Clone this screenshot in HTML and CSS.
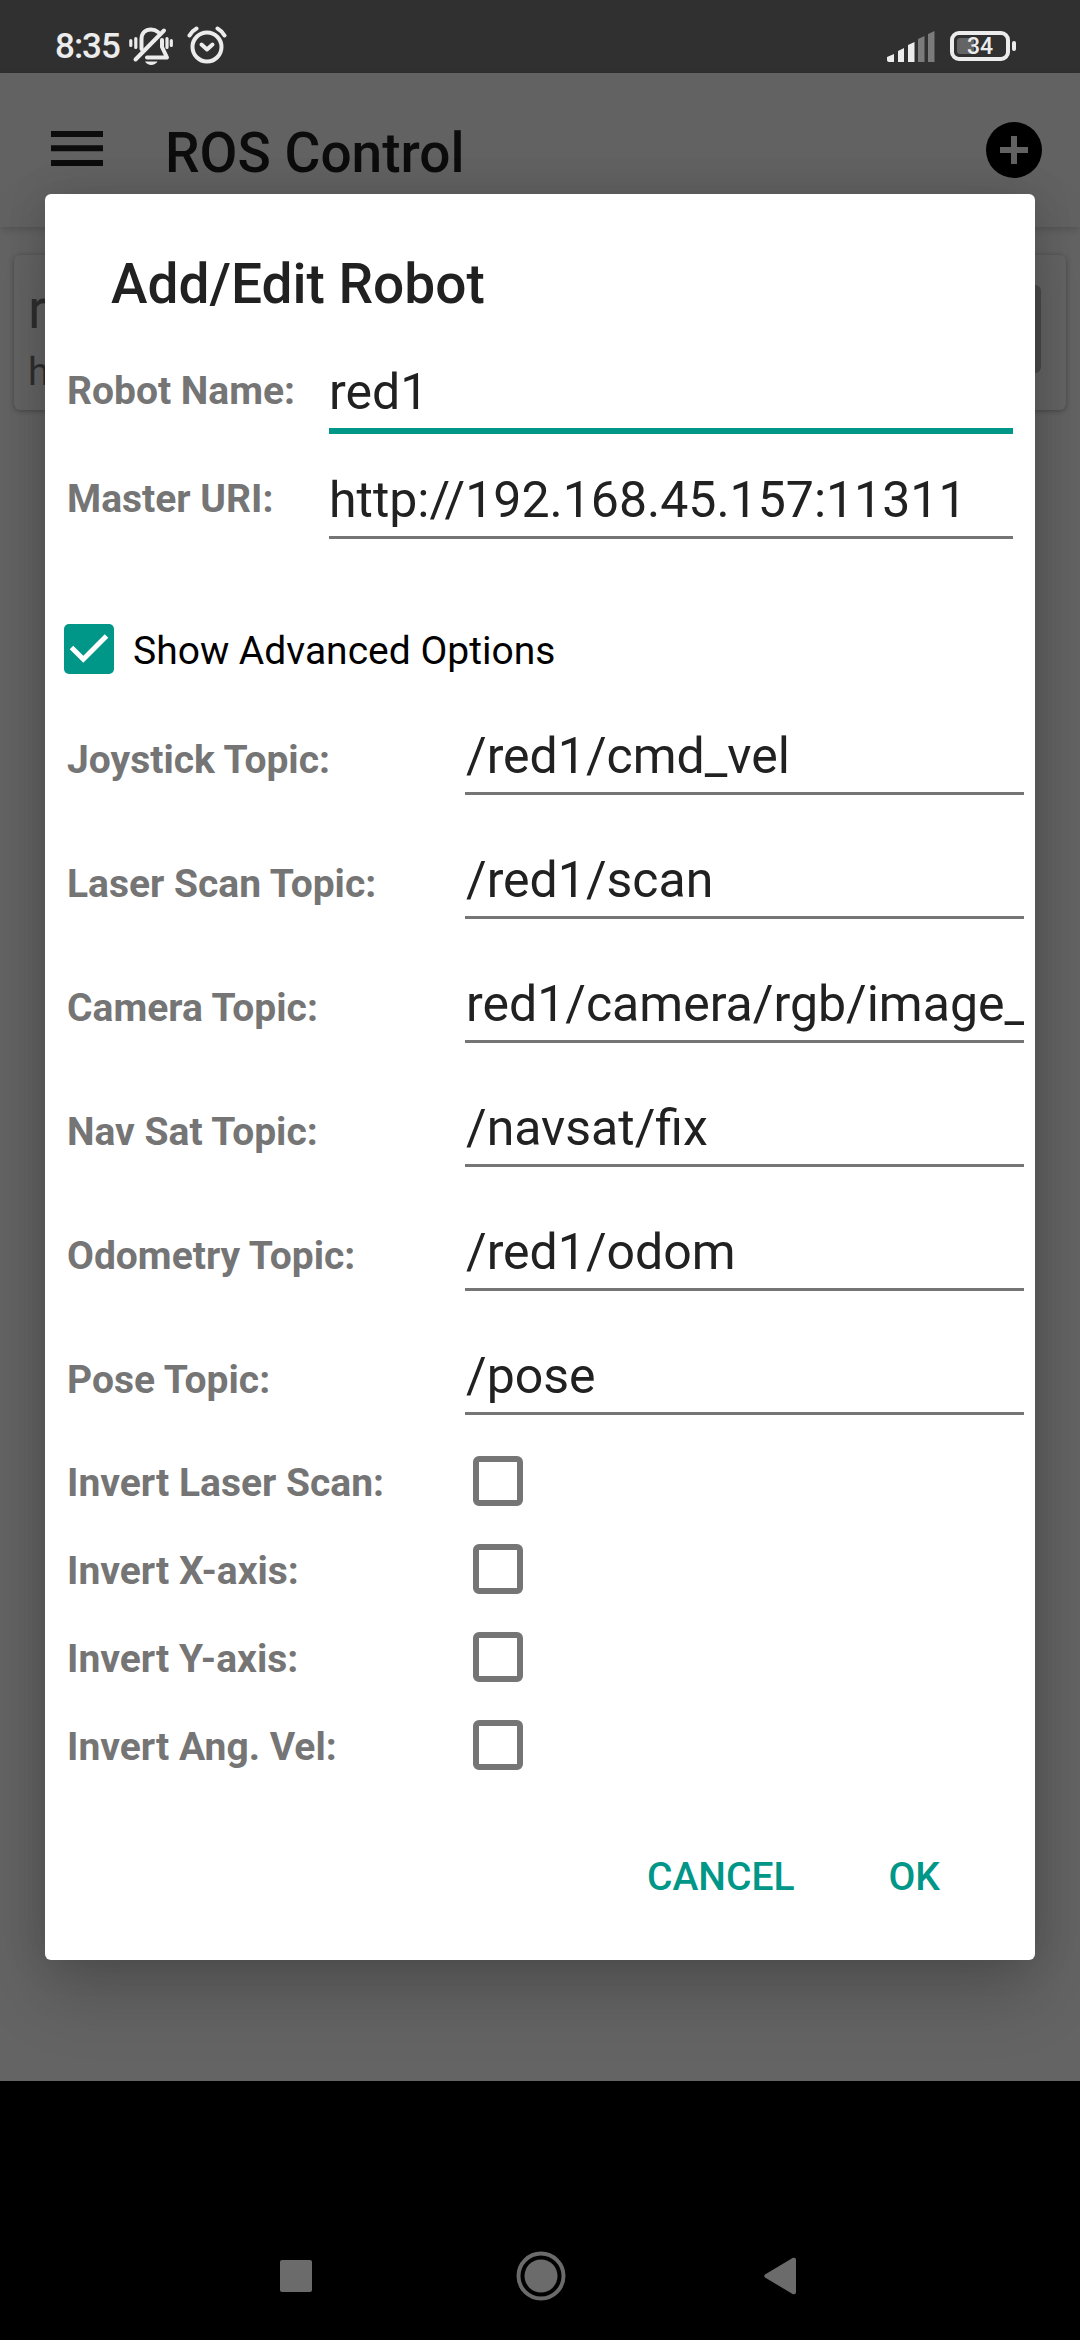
FILE: index.html
```html
<!DOCTYPE html>
<html lang="en">
<head>
<meta charset="utf-8">
<title>ROS Control</title>
<link rel="stylesheet" href="styles.css">
</head>
<body>
<div class="screen">
  <header class="status">
    <span class="clock">8:35</span>
    <svg class="bell" width="44" height="40" viewBox="0 0 44 40" fill="none" stroke="#ececec" stroke-linecap="round">
      <path stroke-width="3.2" d="M1.8 13.5v5M6.8 11.5v9M38 11.5v9M42.300 13.5v5"/>
      <path stroke-width="4" stroke-linejoin="round" d="M12.5 22V12C12.5 6 16.500 2.500 22 2.500C24.500 2.500 27 3.300 29 5M33 13V20L38 30.500H18"/>
      <path stroke-width="4" d="M35 3.500L6.500 32.500"/>
      <path fill="#ececec" stroke="none" d="M16 34.500H28.500C26 39 18.500 39 16 34.500Z"/>
    </svg>
    <svg class="alarm" width="40" height="40" viewBox="0 0 40 40" fill="none" stroke="#ececec" stroke-linecap="round">
      <circle cx="20" cy="21" r="14.500" stroke-width="4"/>
      <path stroke-width="4" stroke-linejoin="round" d="M14.500 18.500L20 23.500L25.500 18.500"/>
      <path stroke-width="4" d="M2.500 9.500Q5 5 9.500 2.500M30.500 2.500Q35 5 37.500 9.500"/>
    </svg>
    <svg class="signal" width="48" height="31" viewBox="0 0 48 31">
      <path fill="#ececec" d="M0 26L7 23V31H2Q0 31 0 29ZM11 20L17 17V31H11ZM21 14L27.500 11V31H21Z"/>
      <path fill="#7b7b7b" d="M31 8L37.500 5V31H31ZM41 3L47.500 0V31H41Z"/>
    </svg>
    <div class="battery"><span class="level"></span><span class="percent">34</span></div>
  </header>
  <div class="appbar">
    <svg class="menu" width="52" height="35" viewBox="0 0 52 35" fill="#0c0c0c"><path d="M0 0H52V6H0ZM0 14.300H52V20.300H0ZM0 29H52V35H0Z"/></svg>
    <h1 class="apptitle">ROS Control</h1>
    <svg class="add" width="56" height="56" viewBox="0 0 56 56"><circle cx="28" cy="28" r="28"/><path fill="#626262" d="M25 14H31V25H42V31H31V42H25V31H14V25H25Z"/></svg>
  </div>
  <main class="content">
    <div class="card">
      <div><div class="robot">r</div><div class="uri">h</div></div>
      <div class="cardbtn"></div>
    </div>
  </main>
  <nav class="nav">
    <svg width="32" height="32" viewBox="0 0 32 32"><rect width="32" height="32" rx="2"/></svg>
    <svg class="home" width="50" height="50" viewBox="0 0 50 50"><circle cx="25" cy="25" r="22.500" fill="none" stroke="#6b6b6b" stroke-width="4"/><circle cx="25" cy="25" r="16.500"/></svg>
    <svg width="32" height="38" viewBox="0 0 32 38"><path d="M1 17.500L29 .8Q32 0 32 3V35Q32 38 29 37.200L1 20.500Q-.5 19 1 17.500Z"/></svg>
  </nav>
  <section class="dialog">
    <h2 class="title">Add/Edit Robot</h2>
    <div class="row main"><label>Robot Name:</label><div class="field focus">red1</div></div>
    <div class="row main"><label>Master URI:</label><div class="field">http://192.168.45.157:11311</div></div>
    <div class="advanced">
      <svg width="50" height="50" viewBox="0 0 50 50"><rect width="50" height="50" rx="5" fill="#009688"/><path fill="none" stroke="#fff" stroke-width="5" d="M7.500 23.500L19.300 35.300L42.500 12"/></svg>
      <span>Show Advanced Options</span>
    </div>
    <div class="row topic"><label>Joystick Topic:</label><div class="field">/red1/cmd_vel</div></div>
    <div class="row topic"><label>Laser Scan Topic:</label><div class="field">/red1/scan</div></div>
    <div class="row topic"><label>Camera Topic:</label><div class="field">red1/camera/rgb/image_</div></div>
    <div class="row topic"><label>Nav Sat Topic:</label><div class="field">/navsat/fix</div></div>
    <div class="row topic"><label>Odometry Topic:</label><div class="field">/red1/odom</div></div>
    <div class="row topic"><label>Pose Topic:</label><div class="field">/pose</div></div>
    <div class="row invert"><label>Invert Laser Scan:</label><span class="box"></span></div>
    <div class="row invert"><label>Invert X-axis:</label><span class="box"></span></div>
    <div class="row invert"><label>Invert Y-axis:</label><span class="box"></span></div>
    <div class="row invert"><label>Invert Ang. Vel:</label><span class="box"></span></div>
    <div class="actions"><span>CANCEL</span><span>OK</span></div>
  </section>
</div>
</body>
</html>
```
FILE: styles.css
```css
* { box-sizing: border-box; }
body { margin: 0; font-family: Roboto, sans-serif; background: #000; }
svg { display: block; flex: none; }
h1, h2 { margin: 0; font-size: 55px; font-weight: 500; line-height: 64px; white-space: nowrap; }

.screen { position: relative; width: 1080px; height: 2340px; overflow: hidden; display: flex; flex-direction: column; }

.status { height: 73px; flex: none; background: #303030; color: #ececec; display: flex; align-items: flex-start; padding-left: 55px; position: relative; }
.clock { font-size: 35px; font-weight: 500; line-height: 40px; letter-spacing: -1px; width: 74px; margin-top: 27px; }
.bell { margin-top: 27px; }
.alarm { margin: 26px 0 0 14px; }
.signal { margin: 31px 0 0 auto; }
.battery { position: relative; width: 60px; height: 30px; margin: 31px 70px 0 15px; border: 4px solid #ececec; border-radius: 9px; display: flex; justify-content: center; align-items: center; }
.battery::after { content: ""; position: absolute; right: -10px; top: 6px; width: 4px; height: 10px; border-radius: 2px; background: #ececec; }
.level { position: absolute; left: 3px; top: 3px; width: 17px; height: 16px; border-radius: 3px; background: #646464; }
.percent { position: relative; font-size: 23px; line-height: 26px; font-weight: 500; top: 1px; }

.appbar { height: 154px; flex: none; background: #626262; display: flex; align-items: flex-start; padding: 0 38px 0 51px; box-shadow: 0 2px 8px rgba(0,0,0,.18); position: relative; color: #0c0c0c; }
.menu { margin-top: 58px; }
.apptitle { margin: 48px 0 0 62px; }
.add { margin: 49px 0 0 auto; }

.content { height: 1854px; flex: none; background: #646464; padding: 28px 14px; }
.card { height: 155px; border-radius: 6px; background: #656565; box-shadow: 0 1px 5px rgba(0,0,0,.3); display: flex; justify-content: space-between; padding: 22px 25px 0 14px; color: #2f2f2f; }
.robot { font-size: 55px; line-height: 64px; }
.uri { font-size: 39px; line-height: 46px; margin-top: 8px; }
.cardbtn { width: 180px; height: 88px; margin-top: 8px; border-radius: 6px; background: #4b4b4b; }

.nav { flex: 1; background: #000; fill: #6b6b6b; display: flex; align-items: center; justify-content: space-between; padding: 130px 284px 0 280px; }
.home { margin-left: 5px; }

.dialog { position: absolute; left: 45px; top: 194px; width: 990px; height: 1766px; background: #fff; border-radius: 6px; color: #212121; padding-top: 58px; box-shadow: 0 32px 70px rgba(0,0,0,.2), 0 0 40px rgba(0,0,0,.12); }
.title { margin: 0 0 30px 66px; }
.row { display: flex; align-items: flex-start; padding-left: 22px; }
label { font-size: 39px; font-weight: 700; line-height: 46px; color: #757575; flex: none; white-space: nowrap; }
.field { font-size: 50px; line-height: 58px; white-space: nowrap; overflow: hidden; border-bottom: 3px solid #757575; }
.main { height: 108px; }
.main label { width: 262px; margin-top: 22px; }
.main .field { width: 684px; height: 85px; padding-top: 17px; }
.main .focus { height: 88px; border-bottom: 6px solid #009688; }
.advanced { display: flex; align-items: center; height: 50px; margin: 62px 0 0 19px; gap: 19px; font-size: 39px; color: #000; }
.advanced span { padding-top: 3px; }
.topic { height: 124px; }
.topic label { width: 398px; margin-top: 63px; }
.topic .field { width: 559px; height: 121px; padding: 53px 0 0 1px; }
.invert { height: 88px; }
.invert label { width: 406px; margin-top: 42px; }
.box { width: 50px; height: 50px; margin-top: 38px; border: 6px solid #757575; border-radius: 6px; }
.actions { display: flex; justify-content: flex-end; gap: 94px; padding-right: 95px; margin-top: 84px; color: #009688; font-size: 39px; line-height: 46px; font-weight: 500; }
```
